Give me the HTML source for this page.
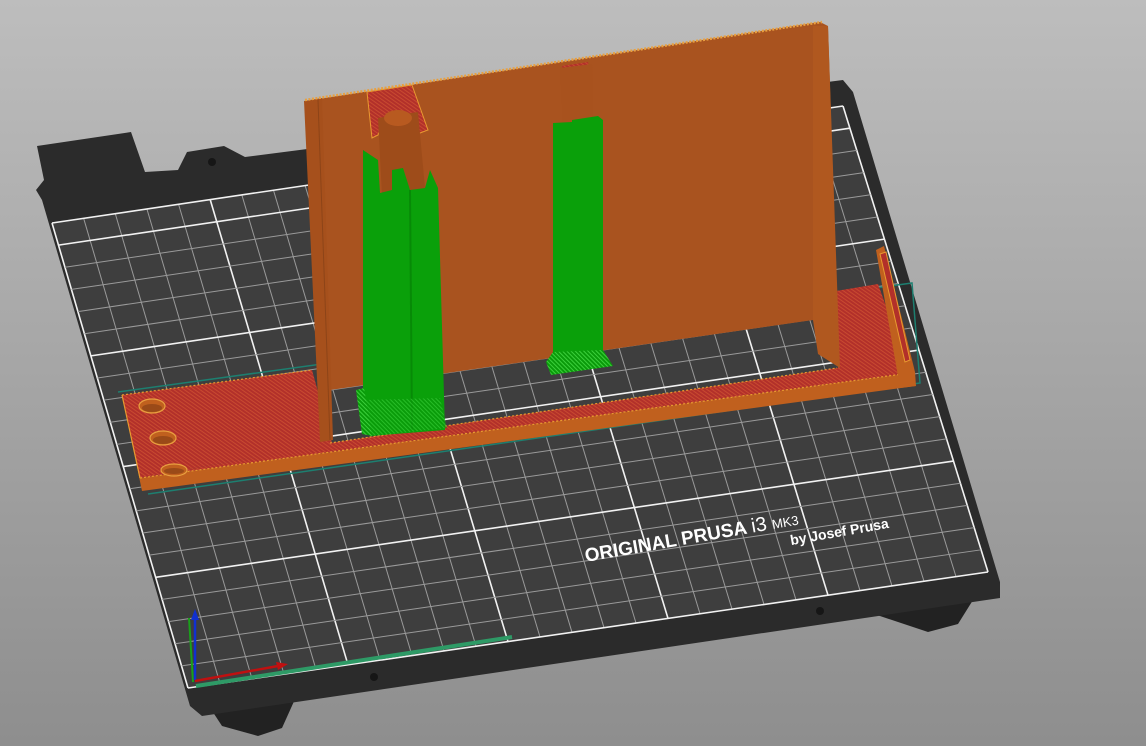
<!DOCTYPE html>
<html><head><meta charset="utf-8"><style>
html,body{margin:0;padding:0;width:1146px;height:746px;overflow:hidden;background:linear-gradient(#bdbdbd,#8e8e8e);}
svg{display:block}
</style></head><body>
<svg width="1146" height="746" viewBox="0 0 1146 746" xmlns="http://www.w3.org/2000/svg">
<defs>
<pattern id="hr" width="3" height="3" patternUnits="userSpaceOnUse" patternTransform="rotate(35)"><rect width="3" height="3" fill="#b2302a"/><rect width="3" height="1" fill="#c84a30"/></pattern>
<pattern id="hg" width="3" height="3" patternUnits="userSpaceOnUse" patternTransform="rotate(45)"><rect width="3" height="3" fill="#0a9a0a"/><rect width="3" height="1" fill="#3cd03c"/></pattern>
</defs>
<polygon points="205,700 300,688 282,728 258,736 222,726" fill="#222"/>
<polygon points="868,612 978,592 958,624 928,632" fill="#222"/>
<polygon points="37,146 131,132 145,172 178,170 187,152 224,146 245,157 843,80 853,92 1000,582 1000,598 202,716 190,706 42,200 36,190 44,180" fill="#2b2b2b"/>
<circle cx="212" cy="162" r="4" fill="#161616"/>
<circle cx="374" cy="677" r="4" fill="#161616"/>
<circle cx="820" cy="611" r="4" fill="#161616"/>
<polygon points="52,223 843,106 988,572 188,688" fill="#3e3e3e"/>
<g id="grid"></g>
<line x1="196" y1="686" x2="512" y2="637" stroke="#2e9a66" stroke-width="4"/>
<line x1="189" y1="618" x2="193" y2="682" stroke="#1aa01a" stroke-width="2"/>
<line x1="195" y1="680" x2="195" y2="618" stroke="#1030d0" stroke-width="2.5"/>
<polygon points="191,620 199,620 195,609" fill="#1030d0"/>
<line x1="195" y1="681" x2="278" y2="666" stroke="#c01010" stroke-width="2.5"/>
<polygon points="276,662 288,664 278,670" fill="#c01010"/>
<g transform="translate(586,562) rotate(-10)" fill="#fff" font-family="Liberation Sans, sans-serif">
<text x="0" y="0" font-size="19" font-weight="bold">ORIGINAL PRUSA <tspan font-weight="normal" font-size="20">i3</tspan> <tspan font-size="13" font-weight="normal">MK3</tspan></text>
<text x="205" y="19" font-size="14" font-weight="bold">by Josef Prusa</text>
</g>
<polyline points="118,392 912,283 920,383 148,494" fill="none" stroke="#1d7f70" stroke-width="1.5"/>
<!-- front face orange -->
<polygon points="122,395 140,478 910,373 916,386 142,491" fill="#c0601e"/>
<!-- left part -->
<polygon points="122,395 312,370 332,443 140,478" fill="url(#hr)"/>
<!-- front strip red -->
<polygon points="330,443 837,368 906,360 910,373 140,478" fill="url(#hr)"/>
<line x1="330" y1="443" x2="837" y2="368" stroke="#e89a30" stroke-width="1.2" stroke-dasharray="2,2"/>
<line x1="140" y1="478" x2="910" y2="373" stroke="#e89a30" stroke-width="1.2" stroke-dasharray="2,2"/>
<line x1="122" y1="395" x2="312" y2="370" stroke="#e89a30" stroke-width="1.2" stroke-dasharray="2,2"/>
<line x1="122" y1="395" x2="140" y2="478" stroke="#e89a30" stroke-width="1.2"/>
<!-- right part -->
<polygon points="830,292 878,284 906,362 838,368" fill="url(#hr)"/>
<polygon points="876,250 884,246 915,372 916,386 900,388" fill="#c0601e"/>
<polygon points="880,254 886,252 910,360 905,362" fill="#b2302a" stroke="#e89a30" stroke-width="1"/>
<g fill="#c0601e" stroke="#e8a040" stroke-width="1.2">
<ellipse cx="152" cy="406" rx="13" ry="7"/><ellipse cx="163" cy="438" rx="13" ry="7"/><ellipse cx="174" cy="470" rx="13" ry="6"/>
</g>
<g fill="#9a4a18"><ellipse cx="152" cy="408" rx="10" ry="4"/><ellipse cx="163" cy="440" rx="10" ry="4"/><ellipse cx="174" cy="471" rx="10" ry="3"/></g>
<polygon points="318,99 820,22 828,26 838,330 813,320 330,390" fill="#a9531f"/>
<polygon points="813,26 828,26 840,368 818,354 813,320" fill="#b0581f"/>
<polygon points="304,101 322,98 333,440 320,442" fill="#a6501c"/>
<line x1="318" y1="100" x2="330" y2="440" stroke="#8d4418" stroke-width="1"/>
<line x1="305" y1="100" x2="822" y2="22" stroke="#e8a040" stroke-width="2.5" stroke-dasharray="2,1.5"/>
<polygon points="367,92 412,85 428,130 420,133 404,132 395,118 385,118 378,135 372,138" fill="url(#hr)" stroke="#e89a30" stroke-width="1"/>
<polygon points="562,66 588,62 590,72 565,76" fill="url(#hr)"/>
<polygon points="378,118 418,112 425,188 382,195" fill="#9e4c1a"/>
<ellipse cx="398" cy="118" rx="14" ry="8" fill="#b85a20"/>
<polygon points="363,150 378,160 380,193 392,190 392,170 403,168 410,190 425,188 430,170 438,188 445,430 370,436 363,400" fill="#0aa00a"/>
<line x1="410" y1="190" x2="412" y2="430" stroke="#078a07" stroke-width="2"/>
<polygon points="356,390 364,388 372,436 362,434" fill="url(#hg)"/>
<polygon points="364,400 440,398 447,428 372,436" fill="url(#hg)" opacity="0.6"/>
<polygon points="560,68 592,64 593,122 563,125" fill="#a8521e"/>
<polygon points="553,123 572,122 572,120 598,116 603,120 603,352 553,352" fill="#0aa00a"/>
<polygon points="553,352 603,350 613,366 551,375 546,362" fill="url(#hg)"/>
<script>
(function(){
var BL=[188,688],BR=[988,572],TR=[843,106],TL=[52,223];
function P(u,v){return [(1-u)*(1-v)*BL[0]+u*(1-v)*BR[0]+u*v*TR[0]+(1-u)*v*TL[0],(1-u)*(1-v)*BL[1]+u*(1-v)*BR[1]+u*v*TR[1]+(1-u)*v*TL[1]];}
var g=document.getElementById('grid'),ns='http://www.w3.org/2000/svg';
function L(a,b,maj){var l=document.createElementNS(ns,'line');l.setAttribute('x1',a[0]);l.setAttribute('y1',a[1]);l.setAttribute('x2',b[0]);l.setAttribute('y2',b[1]);l.setAttribute('stroke',maj?'#f2f2f2':'#9a9a9a');l.setAttribute('stroke-width',maj?1.6:1);g.appendChild(l);}
for(var i=0;i<=25;i++){var u=i/25;L(P(u,0),P(u,1),i%5==0);}
for(var j=0;j<=21;j++){var v=j/21;L(P(0,v),P(1,v),j%5==0||j==21);}
})();
</script>
</svg>
</body></html>
